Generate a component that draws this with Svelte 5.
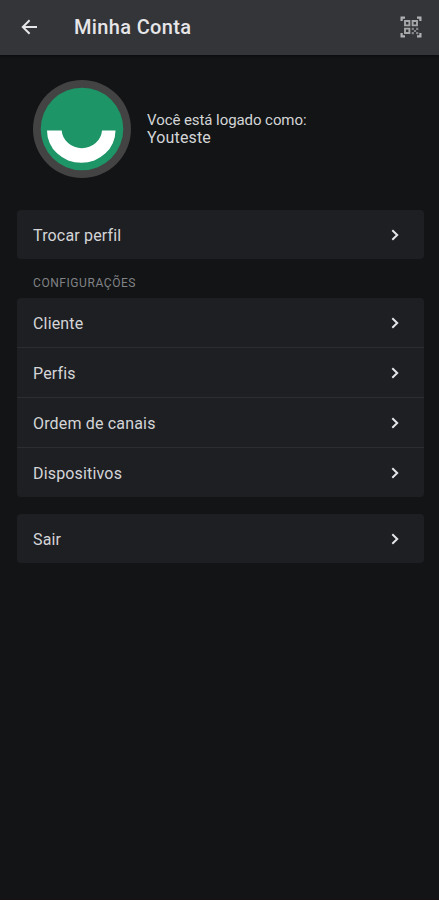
<script>
	const username = 'Youteste';

	// each group is drawn as its own card
	const groups = [
		{ items: ['Trocar perfil'] },
		{ title: 'Configurações', items: ['Cliente', 'Perfis', 'Ordem de canais', 'Dispositivos'] },
		{ items: ['Sair'] }
	];
</script>

<div class="screen">
	<header class="top-bar">
		<button class="icon-btn" aria-label="Voltar">
			<svg class="back" viewBox="0 0 18 18">
				<path d="M17 9H3M9.6 2.2L2.8 9L9.6 15.8" />
			</svg>
		</button>
		<h1>Minha Conta</h1>
		<button class="icon-btn" aria-label="Ler QR code">
			<svg class="qr" viewBox="0 0 22 22">
				<path class="corner" d="M1.6 5V1.6H5M17 1.6H20.4V5M1.6 17V20.4H5M17 20.4H20.4V17" />
				<path class="cell" d="M5 5h4.4v4.4H5zM12.6 5h4.4v4.4h-4.4zM5 12.6h4.4v4.4H5z" />
				<path
					class="dots"
					d="M11.7 11.7h2.2v2.2h-2.2zM13.9 13.9h2.2v2.2h-2.2zM16.1 11.7h2.2v2.2h-2.2zM11.7 16.1h2.2v2.2h-2.2zM16.1 16.1h2.2v2.2h-2.2z"
				/>
			</svg>
		</button>
	</header>

	<section class="profile">
		<svg class="avatar" viewBox="0 0 98 98" aria-hidden="true">
			<circle cx="49" cy="49" r="49" fill="#434343" />
			<circle cx="49" cy="49" r="41.3" fill="#1d9567" />
			<path d="M14 50.5H28.7A20.2 19 0 0 0 69 50.5H82.5A34.2 32.3 0 0 1 14 50.5Z" fill="#fff" />
		</svg>
		<div class="who">
			<span class="hint">Você está logado como:</span>
			<span class="name">{username}</span>
		</div>
	</section>

	<main>
		{#each groups as group}
			{#if group.title}
				<h2>{group.title}</h2>
			{/if}
			<ul class="card" class:titled={group.title}>
				{#each group.items as item}
					<li>
						<span>{item}</span>
						<svg class="chevron" viewBox="0 0 8 12">
							<path d="M1.3 1.2L6.2 6L1.3 10.8" />
						</svg>
					</li>
				{/each}
			</ul>
		{/each}
	</main>
</div>

<style>
	:global(body) {
		margin: 0;
		background: #121416;
	}
	.screen {
		box-sizing: border-box;
		height: 900px;
		background: #121416;
		border-bottom: 1px solid #171113;
		color: #d4d5d7;
		font-family: Roboto, sans-serif;
	}
	.top-bar {
		box-sizing: border-box;
		display: flex;
		align-items: center;
		height: 55px;
		padding: 0 17px 1px 20px;
		background: #343539;
		box-shadow: 0 1px 2px #0a0b0c;
	}
	h1 {
		flex: 1;
		margin: 0 0 0 36px;
		color: #e6e6e8;
		font-size: 20px;
		font-weight: 500;
		letter-spacing: 0.35px;
	}
	.icon-btn {
		display: flex;
		padding: 0;
		border: 0;
		background: none;
	}
	svg path {
		stroke-linejoin: miter;
	}
	.back {
		width: 18px;
		height: 18px;
		fill: none;
		stroke: #e6e6e8;
		stroke-width: 2;
	}
	.qr {
		width: 22px;
		height: 22px;
		fill: none;
	}
	.corner {
		stroke: #b0b1b3;
		stroke-width: 2.2;
	}
	.cell {
		stroke: #a6a7a9;
		stroke-width: 1.9;
	}
	.dots {
		fill: #85868a;
	}
	.profile {
		display: flex;
		align-items: center;
		gap: 16px;
		padding: 25px 33px 32px;
	}
	.avatar {
		width: 98px;
		height: 98px;
	}
	.who {
		display: flex;
		flex-direction: column;
		line-height: 18px;
	}
	.hint {
		font-size: 15px;
		letter-spacing: -0.07px;
	}
	.name {
		font-size: 16px;
		letter-spacing: 0.15px;
	}
	main {
		padding: 0 15px 0 17px;
	}
	h2 {
		margin: 0;
		padding: 17px 16px 8px;
		color: #818285;
		font-size: 12px;
		font-weight: 400;
		line-height: 14px;
		letter-spacing: 0.57px;
		text-transform: uppercase;
	}
	.card {
		margin: 0;
		padding: 0;
		border-radius: 4px;
		background: #1e1f23;
		list-style: none;
	}
	.card.titled {
		margin-bottom: 17px;
	}
	li {
		display: flex;
		align-items: center;
		justify-content: space-between;
		height: 49px;
		padding: 0 25px 0 16px;
		font-size: 16px;
		letter-spacing: 0.17px;
	}
	li span {
		padding-top: 1px;
	}
	li + li {
		border-top: 1px solid #2c2d31;
	}
	.chevron {
		width: 8px;
		height: 12px;
		fill: none;
		stroke: #e6e6e8;
		stroke-width: 2;
	}
</style>
